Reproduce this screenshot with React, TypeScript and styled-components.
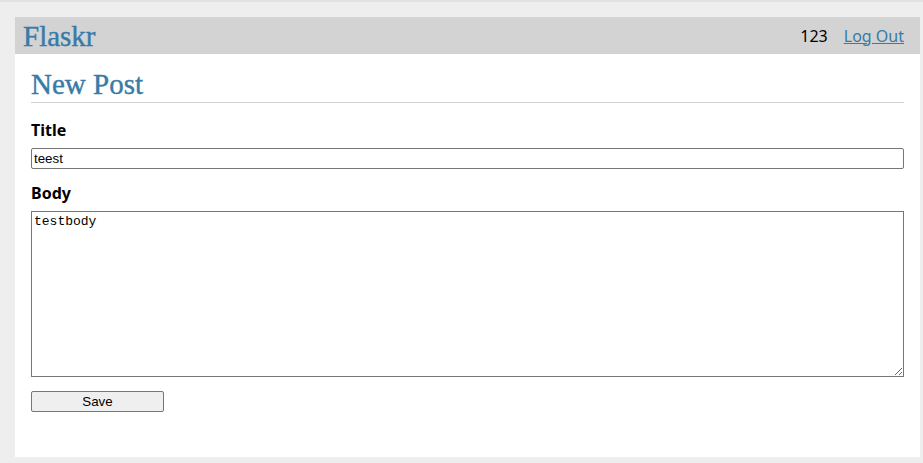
import React from 'react';
import styled, { createGlobalStyle } from 'styled-components';

const GlobalStyle = createGlobalStyle`
	html, body {
		margin: 0;
		padding: 0;
	}
	body {
		background: #eeeeee;
		font-family: 'Noto Sans', 'Liberation Sans', sans-serif;
	}
`;

const Page = styled.div`
	border-top: 2px solid #e2e2e2;
	padding: 15px 3px 0 15px;
	background: #eeeeee;
	min-height: 461px;
	box-sizing: border-box;
`;

const Sheet = styled.div`
	background: #ffffff;
`;

const Nav = styled.nav`
	background: lightgray;
	display: flex;
	align-items: center;
	height: 37px;
	padding: 0 8px;
`;

const Brand = styled.h1`
	flex: auto;
	margin: 0;
	font-family: 'Liberation Serif', serif;
	font-weight: normal;
	font-size: 29px;
	line-height: 32px;
	color: #377ba8;
	-webkit-text-stroke: 0.4px #377ba8;
`;

const Menu = styled.ul`
	display: flex;
	list-style: none;
	margin: 0;
	padding: 0;
	font-size: 16px;
	line-height: 22px;

	li > span,
	li > a {
		display: block;
		padding: 0 8px;
	}
	a {
		color: #377ba8;
	}
`;

const Content = styled.section`
	padding: 0 16px 30px;
`;

const Header = styled.header`
	border-bottom: 1px solid lightgray;
	display: flex;
	align-items: flex-end;
`;

const Title = styled.h1`
	flex: auto;
	margin: 14px 0 2px;
	font-family: 'Liberation Serif', serif;
	font-weight: normal;
	font-size: 29px;
	line-height: 32px;
	color: #377ba8;
	-webkit-text-stroke: 0.4px #377ba8;
`;

const Form = styled.form`
	margin: 16px 0 15px;
	display: flex;
	flex-direction: column;
`;

const Label = styled.label`
	font-weight: bold;
	font-size: 16px;
	line-height: 22px;
	margin-bottom: 7px;
	color: #000;
`;

const Field = styled.input`
	box-sizing: border-box;
	height: 21px;
	margin: 0 0 13px;
	padding: 1px 2px;
	border: 1px solid #767676;
	border-radius: 2px;
	font-family: 'Liberation Sans', Arial, sans-serif;
	font-size: 13.33px;
	color: #000;
`;

const Area = styled.textarea`
	box-sizing: border-box;
	height: 166px;
	margin: 0 0 14px;
	padding: 2px;
	border: 1px solid #767676;
	border-radius: 0;
	font-family: 'Liberation Mono', monospace;
	font-size: 13px;
	line-height: 15px;
	resize: vertical;
	color: #000;
`;

const Submit = styled.input`
	align-self: start;
	box-sizing: border-box;
	width: 133px;
	height: 21px;
	padding: 0;
	background: #efefef;
	border: 1px solid #767676;
	border-radius: 2px;
	font-family: 'Liberation Sans', Arial, sans-serif;
	font-size: 13.33px;
	color: #000;
`;

export default function App() {
	return (
		<>
			<GlobalStyle />
			<Page>
				<Sheet>
					<Nav>
						<Brand>Flaskr</Brand>
						<Menu>
							<li>
								<span>123</span>
							</li>
							<li>
								<a href='#'>Log Out</a>
							</li>
						</Menu>
					</Nav>
					<Content>
						<Header>
							<Title>New Post</Title>
						</Header>
						<Form onSubmit={(e) => e.preventDefault()}>
							<Label htmlFor='title'>Title</Label>
							<Field id='title' name='title' defaultValue='teest' />
							<Label htmlFor='body'>Body</Label>
							<Area id='body' name='body' defaultValue='testbody' />
							<Submit type='submit' value='Save' />
						</Form>
					</Content>
				</Sheet>
			</Page>
		</>
	);
}
